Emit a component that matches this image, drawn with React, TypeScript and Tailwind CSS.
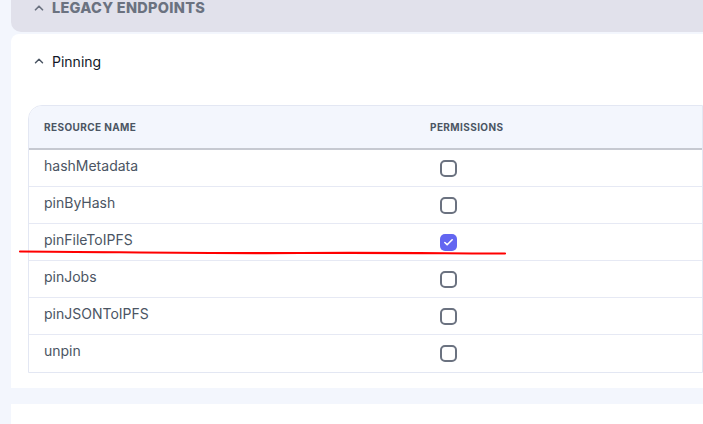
import { ChevronUp, Check } from "lucide-react";

const rows = [
  { name: "hashMetadata", checked: false },
  { name: "pinByHash", checked: false },
  { name: "pinFileToIPFS", checked: true },
  { name: "pinJobs", checked: false },
  { name: "pinJSONToIPFS", checked: false },
  { name: "unpin", checked: false },
];

function Checkbox({ checked }: { checked: boolean }) {
  if (checked) {
    return (
      <div className="w-[17px] h-[17px] rounded-[5px] bg-[#6366f1] flex items-center justify-center">
        <Check size={11} strokeWidth={3.5} className="text-white" />
      </div>
    );
  }
  return <div className="w-[17px] h-[17px] rounded-[5px] border-2 border-[#6b7280] bg-white" />;
}

export default function App() {
  return (
    <div
      className="relative w-[703px] h-[424px] overflow-hidden bg-[#f3f6fd] pl-[11px]"
      style={{ fontFamily: "Inter, 'Noto Sans', sans-serif" }}
    >
      {/* Legacy endpoints header */}
      <div className="h-[32px] bg-[#e1e1eb] rounded-bl-[10px] flex items-start pl-[21px]">
        <div className="flex items-center gap-[6px] -mt-[3px]">
          <ChevronUp size={14} strokeWidth={3} className="text-[#6b7280]" />
          <span className="text-[14.5px] font-extrabold tracking-[0.02em] text-[#6b7280]">LEGACY ENDPOINTS</span>
        </div>
      </div>

      {/* Pinning panel */}
      <div className="mt-[2px] bg-white rounded-tl-[8px] h-[354px] pl-[17px] pt-[17px]">
        <div className="flex items-center gap-[6px] pl-[4px] h-[20px]">
          <ChevronUp size={14} strokeWidth={2.5} className="text-[#4b5563]" />
          <span className="text-[14px] text-[#111827]">Pinning</span>
        </div>

        <div className="mt-[34px] border border-[#e3e7f3] rounded-tl-[14px] overflow-hidden">
          <div className="h-[44px] bg-[#f3f6fd] border-b-2 border-[#c6c9d1] flex items-center text-[10px] font-bold text-[#4b5563] tracking-[0.04em]">
            <div className="w-[401px] pl-[15px]">RESOURCE NAME</div>
            <div>PERMISSIONS</div>
          </div>
          {rows.map((r, i) => (
            <div
              key={r.name}
              className={`h-[37px] flex items-center ${i < rows.length - 1 ? "border-b border-[#e6e9f4]" : ""}`}
            >
              <div className="w-[411px] pl-[15px] text-[14px] text-[#4b5563] -mt-[6px]">{r.name}</div>
              <Checkbox checked={r.checked} />
            </div>
          ))}
        </div>
      </div>

      {/* next panel */}
      <div className="mt-[16px] bg-white h-[40px]" />

      {/* red annotation stroke */}
      <svg className="absolute left-0 top-0 pointer-events-none" width="703" height="424">
        <path
          d="M20 251.5 C 120 252, 200 253.5, 300 253 S 450 253.5, 505 253.5"
          stroke="#ff0000"
          strokeWidth="2.2"
          fill="none"
          strokeLinecap="round"
        />
      </svg>
    </div>
  );
}
